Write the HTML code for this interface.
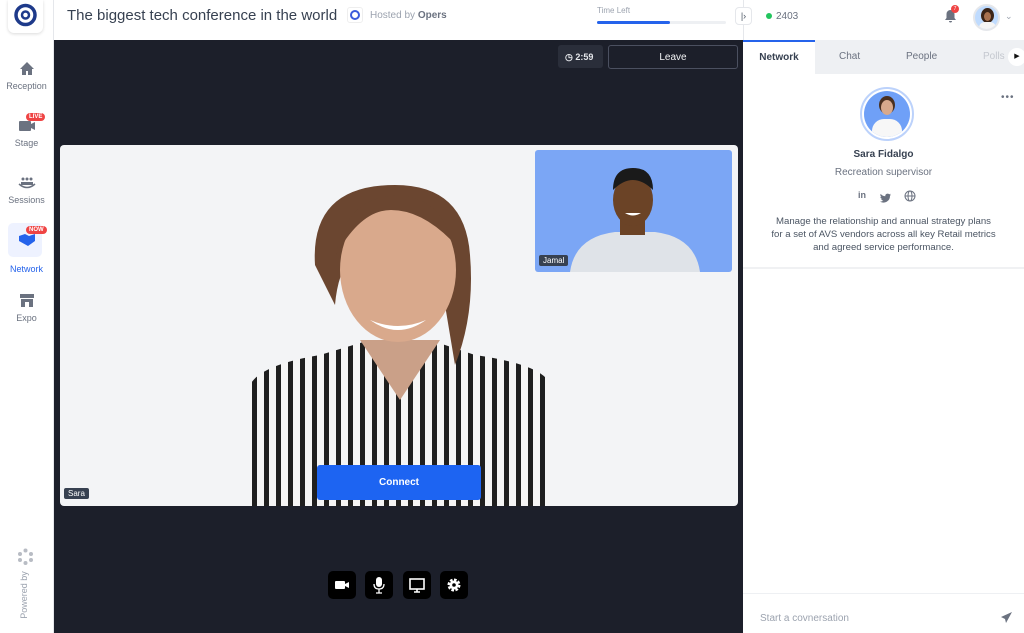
<!DOCTYPE html>
<html><head><meta charset="utf-8"><style>
*{box-sizing:border-box;margin:0;padding:0}
body{width:1024px;height:633px;overflow:hidden;font-family:"Liberation Sans",sans-serif;background:#fff;position:relative}
.abs{position:absolute}
.nav{position:absolute;left:0;width:53px;text-align:center;font-size:9px;color:#6b7280}
.nav div{margin-top:3px}
.badge{position:absolute;background:#ef4444;color:#fff;font-size:6px;font-weight:bold;border-radius:6px;padding:1px 3px}
.ctl{position:absolute;top:571px;width:28px;height:28px;background:#000;border-radius:5px}
</style></head><body>
<!-- sidebar -->
<div class="abs" style="left:53px;top:0;width:1px;height:633px;background:#e5e7eb"></div>
<div class="abs" style="left:8px;top:0;width:35px;height:33px;border-radius:0 0 6px 6px;box-shadow:0 1px 3px rgba(0,0,0,.15);background:#fff">
<svg width="35" height="33"><circle cx="17.5" cy="15" r="9.5" fill="none" stroke="#1e3a8a" stroke-width="3.5"/><circle cx="17.5" cy="15" r="3.5" fill="none" stroke="#1e3a8a" stroke-width="2.5"/></svg></div>
<div class="nav" style="top:61px"><svg width="16" height="15"><path d="M8 1L1 8h2v6h4v-4h2v4h4V8h2z" fill="#6b7280"/></svg><div>Reception</div></div>
<div class="nav" style="top:118px"><svg width="18" height="15"><rect x="1" y="3" width="12" height="10" rx="1" fill="#6b7280"/><path d="M13 6l4-2v8l-4-2z" fill="#6b7280"/></svg><div>Stage</div><span class="badge" style="left:26px;top:-5px">LIVE</span></div>
<div class="nav" style="top:176px"><svg width="18" height="14"><circle cx="5" cy="3" r="1.5" fill="#6b7280"/><circle cx="9" cy="3" r="1.5" fill="#6b7280"/><circle cx="13" cy="3" r="1.5" fill="#6b7280"/><path d="M3 6h12v3H3z" fill="#6b7280"/><path d="M1 8q8 7 16 0" fill="none" stroke="#6b7280" stroke-width="1.5"/></svg><div>Sessions</div></div>
<div class="abs" style="left:8px;top:223px;width:34px;height:34px;background:#eef2ff;border-radius:5px"></div>
<div class="nav" style="top:232px;color:#2563eb"><svg width="18" height="15"><path d="M1 4l6-2 4 2 6-2v7l-7 5-9-5z" fill="#2563eb"/></svg><span class="badge" style="left:26px;top:-6px">NOW</span></div>
<div class="nav" style="top:264px;color:#2563eb">Network</div>
<div class="nav" style="top:293px"><svg width="16" height="15"><rect x="1" y="1" width="14" height="4" fill="#6b7280"/><rect x="2" y="6" width="12" height="8" fill="#6b7280"/><rect x="6" y="9" width="4" height="5" fill="#fff"/></svg><div>Expo</div></div>
<div class="abs" style="left:17px;top:548px"><svg width="17" height="17"><g fill="#b8bcc4"><circle cx="8.5" cy="2.5" r="2"/><circle cx="14" cy="6" r="2"/><circle cx="14" cy="12" r="2"/><circle cx="8.5" cy="15" r="2"/><circle cx="3" cy="12" r="2"/><circle cx="3" cy="6" r="2"/></g></svg></div>
<div class="abs" style="left:-6px;top:590px;transform:rotate(-90deg);font-size:9px;color:#9ca3af;width:60px;text-align:center">Powered by</div>
<!-- header -->
<div class="abs" style="left:67px;top:7px;font-size:15px;color:#374151">The biggest tech conference in the world</div>
<div class="abs" style="left:347px;top:7px;width:16px;height:16px;border:1px solid #eee;border-radius:3px"><svg width="14" height="14"><circle cx="7" cy="7" r="4" fill="none" stroke="#3b5bdb" stroke-width="2"/></svg></div>
<div class="abs" style="left:370px;top:10px;font-size:10px;color:#9ca3af">Hosted by <b style="color:#6b7280;font-weight:600">Opers</b></div>
<div class="abs" style="left:597px;top:6px;font-size:8px;color:#9ca3af">Time Left</div>
<div class="abs" style="left:597px;top:21px;width:129px;height:3px;background:#eef0f3;border-radius:2px"><div style="width:73px;height:3px;background:#2563eb;border-radius:2px"></div></div>
<div class="abs" style="left:743px;top:0;width:1px;height:40px;background:#e5e7eb"></div>
<div class="abs" style="left:735px;top:7px;width:17px;height:18px;background:#fff;border:1px solid #e5e7eb;border-radius:4px;font-size:9px;color:#4b5563;text-align:center;line-height:16px">|›</div>
<div class="abs" style="left:766px;top:13px;width:6px;height:6px;border-radius:50%;background:#22c55e"></div>
<div class="abs" style="left:776px;top:11px;font-size:10px;color:#6b7280">2403</div>
<div class="abs" style="left:944px;top:9px"><svg width="13" height="14"><path d="M6.5 1a4 4 0 0 0-4 4v4L1 11h11l-1.5-2V5a4 4 0 0 0-4-4zM5 12h3a1.5 1.5 0 0 1-3 0z" fill="#6b7280"/></svg></div>
<div class="abs" style="left:951px;top:5px;width:8px;height:8px;border-radius:50%;background:#ef4444;font-size:5px;color:#fff;text-align:center;line-height:8px">7</div>
<div class="abs" style="left:973px;top:4px;width:27px;height:27px;border-radius:50%;background:#bfdbfe;border:2px solid #e5e7eb;overflow:hidden"><div style="position:absolute;left:6px;top:2px;width:13px;height:15px;border-radius:50%;background:#3b2417"></div><div style="position:absolute;left:9px;top:6px;width:7px;height:9px;border-radius:50%;background:#a8714f"></div><div style="position:absolute;left:4px;top:16px;width:17px;height:12px;border-radius:6px 6px 0 0;background:#f5f5f5"></div></div>
<div class="abs" style="left:1005px;top:11px;font-size:9px;color:#9ca3af">⌄</div>
<!-- stage -->
<div class="abs" style="left:54px;top:40px;width:689px;height:593px;background:#1c1f2a"></div>
<div class="abs" style="left:558px;top:45px;width:45px;height:23px;background:#2a2e3a;border-radius:3px;color:#e5e7eb;font-size:9px;font-weight:bold;line-height:24px;padding-left:7px">◷ 2:59</div>
<div class="abs" style="left:608px;top:45px;width:130px;height:24px;border:1px solid #4b5060;border-radius:3px;color:#f3f4f6;font-size:10px;text-align:center;line-height:24px">Leave</div>
<div class="abs" style="left:60px;top:145px;width:678px;height:361px;background:#f3f4f6;border-radius:4px;overflow:hidden">
<svg width="678" height="361" style="position:absolute;left:0;top:0">
<defs><pattern id="st" width="12" height="10" patternUnits="userSpaceOnUse"><rect width="12" height="10" fill="#f5f5f5"/><rect width="5" height="10" fill="#1f1f1f"/></pattern></defs>
<path d="M190 361V240q10-20 70-30l50-15h60l45 15q70 10 75 30v121z" fill="url(#st)"/>
<path d="M300 195l40 60 40-60z" fill="#caa088"/>
<path d="M255 120q-5-80 80-80q70 0 75 70q5 60-15 110l-10-60q-5-70-60-70q-45 10-50 70z" fill="#6b4630"/>
<ellipse cx="338" cy="125" rx="58" ry="72" fill="#d9a98c"/>
<path d="M276 110q10-60 65-60q40 5 50 45q-30-30-60-30q-30 0-55 45z" fill="#6b4630"/>
<path d="M310 175q28 20 56 0q-28 12-56 0z" fill="#fff"/>
</svg>
<div style="position:absolute;left:475px;top:5px;width:197px;height:122px;background:#7ba6f5;border-radius:3px;overflow:hidden">
<svg width="197" height="122"><path d="M35 122q5-35 45-40h40q40 5 45 40z" fill="#dfe3e8"/><rect x="85" y="65" width="25" height="20" fill="#6b4326"/><ellipse cx="98" cy="50" rx="20" ry="26" fill="#6b4326"/><path d="M78 40q0-22 20-22q20 0 20 22q-10-10-20-10q-10 0-20 10z" fill="#1a1a1a"/><path d="M90 63q8 5 16 0z" fill="#fff"/></svg>
<div style="position:absolute;left:4px;top:105px;background:#374151;color:#fff;font-size:8px;padding:1px 4px;border-radius:2px">Jamal</div></div>
<div style="position:absolute;left:4px;top:343px;background:#374151;color:#fff;font-size:8px;padding:1px 4px;border-radius:2px">Sara</div>
<div style="position:absolute;left:257px;top:320px;width:164px;height:35px;background:#1d64f2;border-radius:3px;color:#fff;font-size:10px;font-weight:bold;text-align:center;line-height:35px">Connect</div>
</div>
<div class="ctl" style="left:328px"><svg width="28" height="28"><rect x="7" y="10" width="10" height="8" rx="1" fill="#fff"/><path d="M17 13l4-2v6l-4-2z" fill="#fff"/></svg></div>
<div class="ctl" style="left:365px"><svg width="28" height="28"><rect x="11" y="6" width="6" height="10" rx="3" fill="#fff"/><path d="M9 13q0 5 5 5q5 0 5-5M14 18v4M11 22h6" fill="none" stroke="#fff" stroke-width="1.3"/></svg></div>
<div class="ctl" style="left:403px"><svg width="28" height="28"><rect x="7" y="8" width="14" height="10" fill="none" stroke="#fff" stroke-width="1.6"/><path d="M11 21h6M14 18v3" stroke="#fff" stroke-width="1.6"/></svg></div>
<div class="ctl" style="left:440px"><svg width="28" height="28"><circle cx="14" cy="14" r="5" fill="none" stroke="#fff" stroke-width="3" stroke-dasharray="2.5 1.4"/><circle cx="14" cy="14" r="4.5" fill="#fff"/><circle cx="14" cy="14" r="1.8" fill="#000"/></svg></div>
<!-- right panel -->
<div class="abs" style="left:743px;top:40px;width:281px;height:34px;background:#eef0f3"></div>
<div class="abs" style="left:743px;top:40px;width:72px;height:34px;background:#fff;border-top:2px solid #2563eb;font-size:10px;font-weight:bold;color:#374151;text-align:center;line-height:32px">Network</div>
<div class="abs" style="left:839px;top:51px;font-size:10px;color:#6b7280">Chat</div>
<div class="abs" style="left:906px;top:51px;font-size:10px;color:#6b7280">People</div>
<div class="abs" style="left:983px;top:51px;font-size:10px;color:#c4c8cf">Polls</div>
<div class="abs" style="left:1008px;top:48px;width:18px;height:18px;border-radius:50%;background:#fff;font-size:7px;text-align:center;line-height:18px;color:#111">▶</div>
<div class="abs" style="left:1001px;top:92px;font-size:10px;color:#6b7280;letter-spacing:1px">•••</div>
<div class="abs" style="left:860px;top:87px;width:54px;height:54px;border-radius:50%;border:2px solid #bcd2fb;padding:2px"><div style="width:46px;height:46px;border-radius:50%;background:#6fa0f7;overflow:hidden;position:relative"><div style="position:absolute;left:15px;top:5px;width:16px;height:18px;border-radius:50%;background:#4a3020"></div><div style="position:absolute;left:17px;top:9px;width:12px;height:15px;border-radius:50%;background:#d8a98c"></div><div style="position:absolute;left:8px;top:28px;width:30px;height:20px;border-radius:12px 12px 0 0;background:#f7f7f7"></div></div></div>
<div class="abs" style="left:743px;top:149px;width:281px;text-align:center;font-size:10px;font-weight:bold;color:#374151">Sara Fidalgo</div>
<div class="abs" style="left:743px;top:167px;width:281px;text-align:center;font-size:10px;color:#6b7280">Recreation supervisor</div>
<div class="abs" style="left:858px;top:190px;font-size:9px;font-weight:bold;color:#6b7280">in</div>
<div class="abs" style="left:880px;top:190px"><svg width="11" height="10"><path d="M11 1.5l-1.3.4.9-1.1-1.4.5A2.3 2.3 0 0 0 5.3 3.3 6.5 6.5 0 0 1 .7.9a2.3 2.3 0 0 0 .7 3L.4 3.7a2.3 2.3 0 0 0 1.8 2.2l-1 .1a2.3 2.3 0 0 0 2.1 1.6A4.6 4.6 0 0 1 0 8.5 6.5 6.5 0 0 0 10 2.9z" fill="#6b7280"/></svg></div>
<div class="abs" style="left:904px;top:189px"><svg width="12" height="12"><circle cx="6" cy="6" r="5" fill="none" stroke="#6b7280"/><ellipse cx="6" cy="6" rx="2" ry="5" fill="none" stroke="#6b7280"/><path d="M1 6h10" stroke="#6b7280"/></svg></div>
<div class="abs" style="left:743px;top:215px;width:281px;text-align:center;font-size:9.6px;line-height:13px;color:#4b5563">Manage the relationship and annual strategy plans<br>for a set of AVS vendors across all key Retail metrics<br>and agreed service performance.</div>
<div class="abs" style="left:743px;top:267px;width:281px;height:2px;background:#f0f1f3"></div>
<div class="abs" style="left:743px;top:593px;width:281px;height:1px;background:#eef0f3"></div>
<div class="abs" style="left:760px;top:613px;font-size:10px;color:#9ca3af">Start a covnersation</div>
<div class="abs" style="left:1000px;top:611px"><svg width="13" height="13"><path d="M12 1L1 6l4 2 1 4z" fill="#6b7280"/></svg></div>
</body></html>
